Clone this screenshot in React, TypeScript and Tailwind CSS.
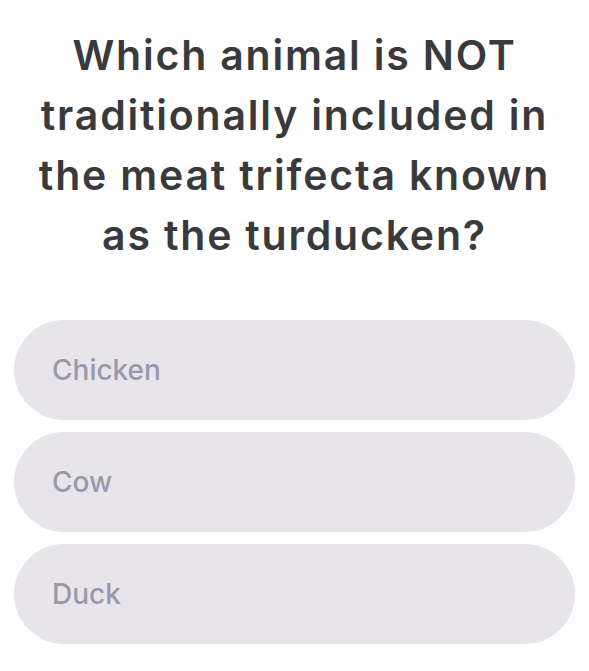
import React from "react";

export default function App() {
  const options = ["Chicken", "Cow", "Duck"];
  return (
    <div className="w-[589px] h-[671px] bg-white overflow-hidden" style={{ fontFamily: "Inter, 'Noto Sans', sans-serif" }}>
      <div className="pt-[25px] px-[24px] text-center text-[41px] leading-[60px] font-semibold tracking-[1.8px] text-[#3a3a3d]">
        Which animal is NOT traditionally included in the meat trifecta known as the turducken?
      </div>
      <div className="mt-[55px] px-[14px] flex flex-col gap-[12px]">
        {options.map((o) => (
          <div key={o} className="h-[100px] rounded-full bg-[#e7e5ea] flex items-center pl-[38px] text-[28px] text-[#9b98ab] font-medium">
            {o}
          </div>
        ))}
      </div>
    </div>
  );
}
